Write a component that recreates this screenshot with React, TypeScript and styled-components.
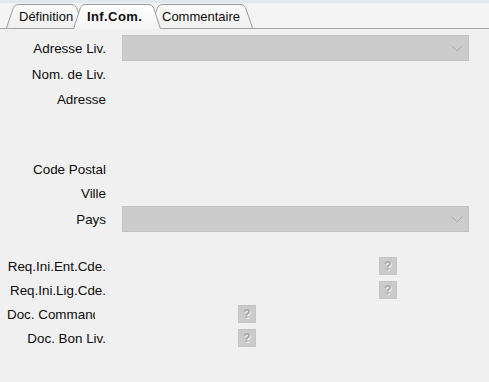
import React from 'react';
import styled, { createGlobalStyle } from 'styled-components';

const GlobalStyle = createGlobalStyle`
  html, body {
    margin: 0;
    padding: 0;
    background: #f0f0f0;
  }
  body {
    font-family: "Liberation Sans", Arial, sans-serif;
    font-size: 13.4px;
    color: #0c0c0c;
  }
`;

const Page = styled.div`
  width: 489px;
  height: 382px;
  overflow: hidden;
  display: flex;
  flex-direction: column;
  background: #f0f0f0;
`;

const TabStrip = styled.div`
  display: flex;
  align-items: flex-end;
  height: 25px;
  padding-left: 6px;
  border-top: 3px solid #e1e9ee;
  border-bottom: 1px solid #a3a3a3;
  background: #f4f4f4;
`;

const Tab = styled.div<{ $w: number; $pad: number; $active?: boolean; $z: number }>`
  position: relative;
  flex: none;
  width: ${p => p.$w}px;
  height: ${p => (p.$active ? 25 : 24)}px;
  margin-bottom: ${p => (p.$active ? -1 : 0)}px;
  margin-left: -11px;
  z-index: ${p => p.$z};
  display: flex;
  align-items: flex-start;
  padding-left: ${p => p.$pad}px;
  padding-top: 5px;
  box-sizing: border-box;
  font-size: 13px;
  font-weight: ${p => (p.$active ? 700 : 400)};
  letter-spacing: ${p => (p.$active ? '0.4px' : '0')};
  color: #0c0c0c;
  white-space: nowrap;

  &:first-child {
    margin-left: 0;
  }

  svg {
    position: absolute;
    left: 0;
    top: 0;
  }

  span {
    position: relative;
  }
`;

const Form = styled.div`
  display: flex;
  flex-direction: column;
  padding-top: 6px;
`;

const Row = styled.div<{ $h: number; $mt?: number }>`
  display: flex;
  align-items: center;
  height: ${p => p.$h}px;
  margin-top: ${p => p.$mt ?? 0}px;
`;

const Label = styled.div<{ $padRight?: number }>`
  flex: none;
  width: 106px;
  padding-right: ${p => p.$padRight ?? 0}px;
  box-sizing: border-box;
  text-align: right;
  white-space: nowrap;
  line-height: 15px;
`;

const Clip = styled.span<{ $w: number }>`
  display: inline-block;
  width: ${p => p.$w}px;
  overflow: hidden;
  text-align: right;
  vertical-align: top;
`;

const Combo = styled.div`
  flex: none;
  margin-left: 16px;
  width: 347px;
  height: 26px;
  box-sizing: border-box;
  background: #cccccc;
  border: 1px solid #c2c2c2;
  display: flex;
  align-items: center;
  justify-content: flex-end;
  padding-right: 5px;
`;

const HelpButton = styled.div<{ $x: number }>`
  flex: none;
  margin-left: ${p => p.$x - 106}px;
  width: 18px;
  height: 18px;
  box-sizing: border-box;
  background: #cbcbcb;
  border: 1px solid #c4c4c4;
  display: flex;
  align-items: center;
  justify-content: center;
  font-size: 12px;
  font-weight: 700;
  line-height: 1;
  color: #a6a6a6;
  text-shadow: 1px 1px 0 #f4f4f4;
`;

const tabPath = (w: number, h: number) =>
  `M0.5 ${h} L7.5 3.5 Q9 0.5 12 0.5 L${w - 12} 0.5 Q${w - 9} 0.5 ${w - 7.5} 3.5 L${w - 0.5} ${h}`;

const TabShape: React.FC<{ w: number; h: number; active?: boolean }> = ({ w, h, active }) => (
  <svg width={w} height={h} viewBox={`0 0 ${w} ${h}`}>
    <defs>
      <linearGradient id={`tg${w}`} x1="0" y1="0" x2="0" y2="1">
        <stop offset="0" stopColor={active ? '#ffffff' : '#fbfbfb'} />
        <stop offset="1" stopColor={active ? '#f4f4f4' : '#f0f0f0'} />
      </linearGradient>
    </defs>
    <path d={tabPath(w, h) + ' Z'} fill={`url(#tg${w})`} stroke="none" />
    <path d={tabPath(w, h)} fill="none" stroke="#9c9c9c" strokeWidth="1" />
  </svg>
);

const Chevron = () => (
  <svg width="12" height="7" viewBox="0 0 12 7">
    <polyline points="0.5,0.5 6,6 11.5,0.5" fill="none" stroke="#acacac" strokeWidth="1" />
  </svg>
);

const tabs = [
  { label: 'Définition', w: 78, pad: 13, z: 1 },
  { label: 'Inf.Com.', w: 88, pad: 14, z: 3, active: true },
  { label: 'Commentaire', w: 103, pad: 12, z: 2 },
];

const helpRows = [
  { label: 'Req.Ini.Ent.Cde.', x: 379 },
  { label: 'Req.Ini.Lig.Cde.', x: 379 },
  { label: 'Doc. Commande', x: 238, clip: 88 },
  { label: 'Doc. Bon Liv.', x: 238 },
];

export default function App() {
  return (
    <Page>
      <GlobalStyle />
      <TabStrip>
        {tabs.map(t => (
          <Tab key={t.label} $w={t.w} $pad={t.pad} $z={t.z} $active={t.active}>
            <TabShape w={t.w} h={t.active ? 25 : 24} active={t.active} />
            <span>{t.label}</span>
          </Tab>
        ))}
      </TabStrip>

      <Form>
        <Row $h={26}>
          <Label>Adresse Liv.</Label>
          <Combo>
            <Chevron />
          </Combo>
        </Row>
        <Row $h={27}>
          <Label>Nom. de Liv.</Label>
        </Row>
        <Row $h={22}>
          <Label>Adresse</Label>
        </Row>

        <Row $h={24} $mt={47}>
          <Label>Code Postal</Label>
        </Row>
        <Row $h={25}>
          <Label>Ville</Label>
        </Row>
        <Row $h={26}>
          <Label>Pays</Label>
          <Combo>
            <Chevron />
          </Combo>
        </Row>

        {helpRows.map((r, i) => (
          <Row key={r.label} $h={24} $mt={i === 0 ? 22 : 0}>
            {r.clip ? (
              <Label $padRight={11}>
                <Clip $w={r.clip}>{r.label}</Clip>
              </Label>
            ) : (
              <Label>{r.label}</Label>
            )}
            <HelpButton $x={r.x}>?</HelpButton>
          </Row>
        ))}
      </Form>
    </Page>
  );
}
